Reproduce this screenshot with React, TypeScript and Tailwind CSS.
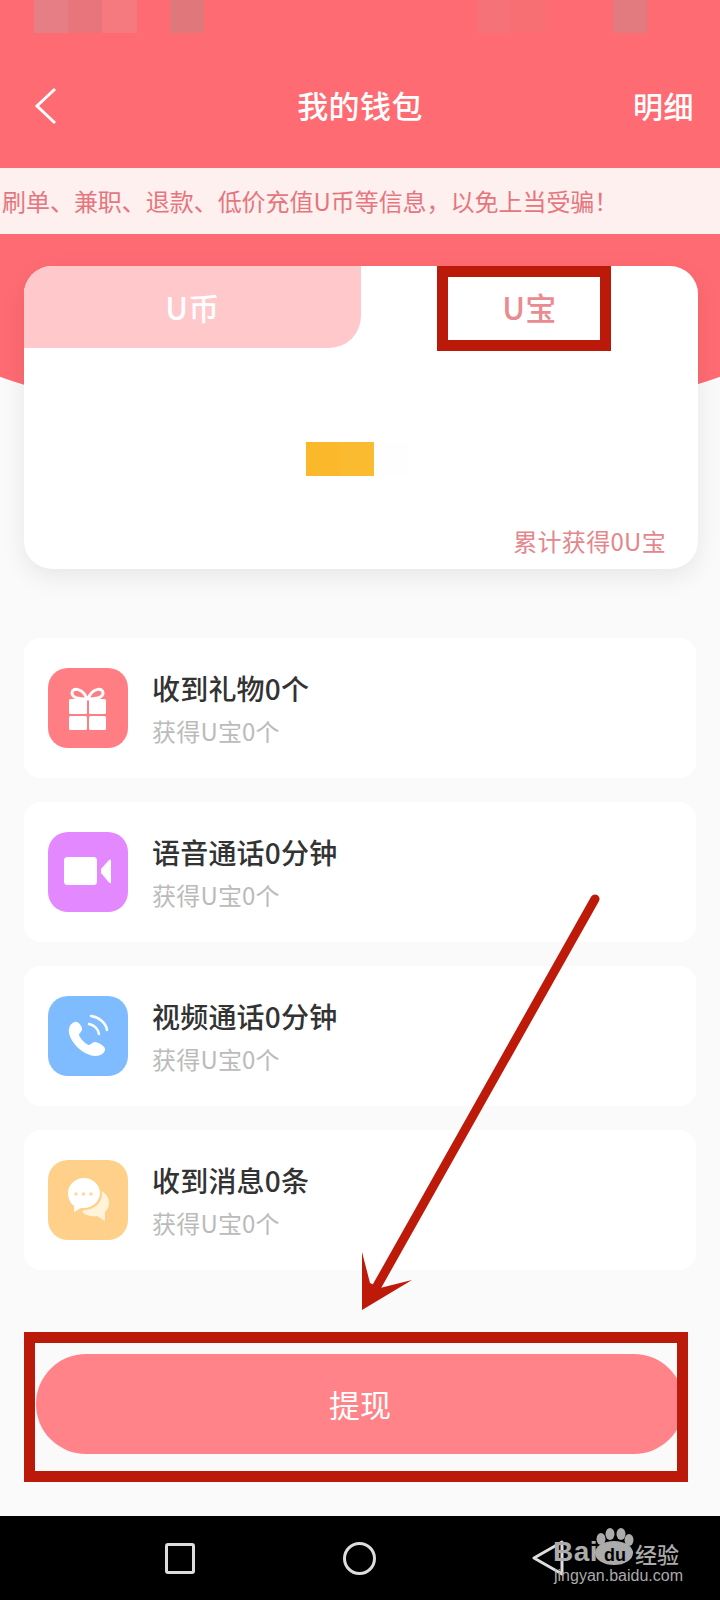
import React from 'react';

const font = "font-['Noto_Sans_CJK_SC','Noto_Sans',sans-serif]";

const GiftIcon = () => (
    <svg viewBox="0 0 80 80" className="w-[80px] h-[80px]">
        <path d="M39 31 C35 20 24 19 24 25 C24 30 33 31 39 31 C45 31 55 30 55 25 C55 19 44 20 40 31" fill="none" stroke="#fff" strokeWidth="3" />
        <rect x="21" y="31" width="18" height="15" rx="1.5" fill="#fff" />
        <rect x="41" y="31" width="17" height="15" rx="1.5" fill="#fff" />
        <rect x="21" y="48" width="18" height="14" rx="1.5" fill="#fff" />
        <rect x="41" y="48" width="17" height="14" rx="1.5" fill="#fff" />
    </svg>
);

const VideoIcon = () => (
    <svg viewBox="0 0 80 80" className="w-[80px] h-[80px]">
        <rect x="16" y="25" width="33" height="28" rx="3.5" fill="#fff" />
        <path d="M53 37 L61 28 Q63 26.5 63 29 L63 50 Q63 52 61 50.5 L53 41 Z" fill="#fff" />
    </svg>
);

const PhoneIcon = () => (
    <svg viewBox="0 0 80 80" className="w-[80px] h-[80px]">
        <path d="M27 26 C23 27 20 31 21 37 C23 47 35 59 47 60 C53 60 57 57 57 53 C57 50 50 46 47 46 C44 46 43 49 41 49 C37 48 32 42 31 39 C31 37 34 36 34 33 C34 30 30 25 27 26 Z" fill="#fff" />
        <path d="M43 20 C51 21 58 27 59 34" fill="none" stroke="#fff" strokeWidth="2.5" strokeLinecap="round" />
        <path d="M41 28 C46 29 50 33 51 38" fill="none" stroke="#fff" strokeWidth="2.5" strokeLinecap="round" />
    </svg>
);

const ChatIcon = () => (
    <svg viewBox="0 0 80 80" className="w-[80px] h-[80px]">
        <path d="M52 30 C58 33 61 38 61 43 C61 47 59 50 57 52 L57 61 L49 56 C43 57 37 55 34 52 Z" fill="#fff3d9" />
        <path d="M36 18 C46 18 54 25 54 34 C54 43 46 50 36 50 L33 50 L26 54 L26 47 C20 44 18 39 18 34 C18 25 26 18 36 18 Z" fill="#ffd08a" />
        <path d="M36 18 C45 18 52 25 52 33 C52 41 45 48 36 48 L33 48 L26 52 L26 46 C22 43 20 38 20 33 C20 25 27 18 36 18 Z" fill="#fff" />
        <circle cx="28" cy="34" r="1.8" fill="#ffd9a3" />
        <circle cx="35.5" cy="34" r="1.8" fill="#ffd9a3" />
        <circle cx="43" cy="34" r="1.8" fill="#ffd9a3" />
    </svg>
);

const rows = [
    { title: '收到礼物0个', color: 'bg-[#ff7e84]', icon: <GiftIcon /> },
    { title: '语音通话0分钟', color: 'bg-[#e388ff]', icon: <VideoIcon /> },
    { title: '视频通话0分钟', color: 'bg-[#7fbcff]', icon: <PhoneIcon /> },
    { title: '收到消息0条', color: 'bg-[#ffd08a]', icon: <ChatIcon /> },
];

const App: React.FC = () => {
    return (
        <div className={`relative w-[720px] h-[1600px] overflow-hidden bg-[#fafafa] ${font}`}>
            {/* red backdrop with the curved bottom */}
            <div className="absolute left-[-90px] top-0 w-[900px] h-[426px] bg-[#ff6b72] rounded-b-[450px_123px]" />

            <div className="relative flex flex-col">
                {/* blurred status bar */}
                <div className="flex h-[33px]">
                    <div className="w-[34px] ml-[34px] bg-[#e57f85]" />
                    <div className="w-[34px] bg-[#e8757b]" />
                    <div className="w-[35px] bg-[#f57a80]" />
                    <div className="w-[34px] ml-[33px] bg-[#e0777b]" />
                    <div className="w-[33px] ml-[273px] bg-[#f57278]" />
                    <div className="w-[35px] bg-[#f76f72]" />
                    <div className="w-[34px] ml-[68px] bg-[#e27b80]" />
                </div>

                <div className="relative flex items-center justify-center h-[66px] mt-[39px] mb-[2px]">
                    <svg viewBox="0 0 24 38" className="absolute left-[34px] top-[15px] w-[24px] h-[38px]">
                        <path d="M21 2 L3 19 L21 36" fill="none" stroke="#fff" strokeWidth="3" />
                    </svg>
                    <span className="text-[31px] tracking-[0.4px] font-medium text-white">我的钱包</span>
                    <span className="absolute right-[26px] text-[30px] tracking-[0.5px] font-medium text-white">明细</span>
                </div>

                <div className="flex items-center h-[66px] mt-[28px] pl-[2px] bg-[#fff0f0] overflow-hidden whitespace-nowrap text-[24px] tracking-[-0.04px] text-[#e5767d]">
                    刷单、兼职、退款、低价充值U币等信息，以免上当受骗！
                </div>

                {/* wallet card */}
                <div className="flex flex-col w-[674px] h-[303px] mt-[32px] ml-[24px] bg-white rounded-[28px] overflow-hidden shadow-[0_8px_24px_rgba(0,0,0,0.08)]">
                    <div className="flex h-[82px]">
                        <div className="flex items-center justify-center w-[337px] bg-[#ffc8cb] rounded-br-[32px] text-[31px] tracking-[0.5px] font-medium text-white">U币</div>
                        <div className="flex flex-1 items-center justify-center text-[31px] tracking-[0.5px] font-medium text-[#e98b91]">U宝</div>
                    </div>
                    <div className="flex h-[34px] mt-[94px] ml-[282px]">
                        <div className="w-[34px] bg-[#fbb82a]" />
                        <div className="w-[34px] bg-[#fbbb30]" />
                        <div className="w-[34px] bg-[#fefefe]" />
                    </div>
                    <div className="mt-auto mb-[12px] mr-[32px] text-right text-[24px] leading-[32px] tracking-[0.3px] text-[#e5858c]">累计获得0U宝</div>
                </div>

                {/* income rows */}
                <div className="flex flex-col gap-[24px] mt-[69px] mx-[24px]">
                    {rows.map(row => (
                        <div key={row.title} className="flex items-center h-[140px] rounded-[16px] bg-white pl-[24px]">
                            <div className={`w-[80px] h-[80px] rounded-[20px] ${row.color}`}>{row.icon}</div>
                            <div className="flex flex-col ml-[24px]">
                                <span className="text-[28px] leading-[40px] tracking-[0.2px] font-medium text-[#333]">{row.title}</span>
                                <span className="mt-[6px] text-[24px] leading-[34px] tracking-[0.2px] text-[#bbb]">获得U宝0个</span>
                            </div>
                        </div>
                    ))}
                </div>

                <button className="flex items-center justify-center w-[648px] h-[100px] mt-[84px] ml-[36px] rounded-full bg-[#ff8388] text-[31px] text-white">提现</button>

                {/* android nav bar */}
                <div className="flex items-center h-[84px] mt-[62px] pl-[165px] bg-black">
                    <div className="w-[30px] h-[31px] rounded-[3px] border-[3px] border-[#ddd]" />
                    <div className="w-[33px] h-[33px] ml-[148px] rounded-full border-[3px] border-[#ddd]" />
                    <svg viewBox="0 0 33 36" className="w-[33px] h-[36px] ml-[156px]">
                        <path d="M30 2 L2 18 L30 34 Z" fill="none" stroke="#ddd" strokeWidth="3" strokeLinejoin="round" />
                    </svg>
                </div>
            </div>

            {/* red annotations */}
            <div className="absolute left-[437px] top-[266px] w-[174px] h-[85px] border-[11px] border-[#bb1a0a]" />
            <div className="absolute left-[24px] top-[1332px] w-[664px] h-[150px] border-[11px] border-[#bb1a0a]" />
            <svg viewBox="350 890 260 430" className="absolute left-[350px] top-[890px] w-[260px] h-[430px]">
                <path d="M595 899 L372 1295" fill="none" stroke="#bd1a0a" strokeWidth="9" strokeLinecap="round" />
                <path d="M362 1310 L362 1252 L370 1283 L380 1288 L412 1280 Z" fill="#bd1a0a" />
            </svg>

            {/* baidu watermark */}
            <div className="absolute left-[553px] top-[1530px] w-[130px] h-[56px] text-[#ababab]">
                <span className="absolute left-0 top-[6px] font-['Liberation_Sans',sans-serif] text-[28px] tracking-[0.5px] leading-[32px] font-bold">Bai</span>
                <svg viewBox="0 0 44 40" className="absolute left-[41px] top-[-2px] w-[44px] h-[40px]">
                    <ellipse cx="7" cy="11" rx="4.5" ry="6" fill="#ababab" />
                    <ellipse cx="16" cy="6" rx="4.5" ry="6" fill="#ababab" />
                    <ellipse cx="27" cy="6" rx="4.5" ry="6" fill="#ababab" />
                    <ellipse cx="35" cy="12" rx="4.5" ry="6" fill="#ababab" />
                    <ellipse cx="20" cy="25" rx="19" ry="12" fill="#ababab" />
                </svg>
                <span className="absolute left-[51px] top-[15px] font-['Liberation_Sans',sans-serif] text-[18px] leading-[20px] font-bold text-black">du</span>
                <span className="absolute left-[82px] top-[9px] text-[22px] leading-[28px] font-medium">经验</span>
                <span className="absolute left-[1px] top-[36px] font-['Liberation_Sans',sans-serif] text-[16px] leading-[20px]">jingyan.baidu.com</span>
            </div>
        </div>
    );
};

export default App;
